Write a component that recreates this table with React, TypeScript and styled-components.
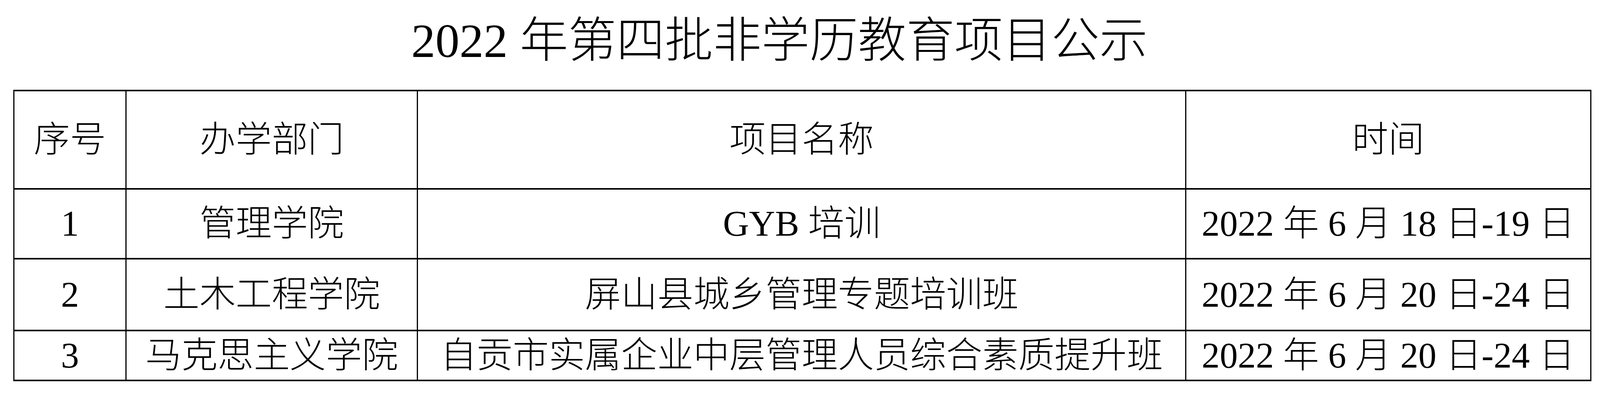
import styled, { createGlobalStyle } from "styled-components";

// sizes are taken from a 4207px wide page and kept relative to the viewport width
const GlobalStyle = createGlobalStyle`
    html, body {
        margin: 0;
        padding: 0;
        background: #fff;
    }
    body {
        font-family: "Liberation Serif", "Noto Sans CJK SC", serif;
        color: #000;
    }
`;

const Page = styled.main`
    width: 100%;
    padding-left: 0.832vw;
    box-sizing: border-box;
`;

const Title = styled.h1`
    margin: 0;
    height: 230px;
    box-sizing: border-box;
    padding-top: 41px;
    padding-right: 3.4vw;
    text-align: center;
    font-size: 3.019vw;
    line-height: 127px;
    font-weight: 300;
`;

const Table = styled.table`
    width: 98.62vw;
    border-collapse: collapse;
    table-layout: fixed;
`;

const Col = styled.col<{ $w: number }>`
    width: ${(p) => p.$w}%;
`;

const Row = styled.tr<{ $h: number }>`
    height: ${(p) => p.$h}px;
`;

const Cell = styled.td`
    border-style: solid;
    border-color: #000;
    border-width: 4px 3px;
    padding: 0;
    text-align: center;
    vertical-align: middle;
    font-size: 2.258vw;
    line-height: 1;
    font-weight: 300;
    white-space: nowrap;
`;

const widths = [7.11, 18.486, 48.735, 25.669];

const rows = [
    { no: "1", dept: "管理学院", name: "GYB 培训", time: "2022 年 6 月 18 日-19 日", h: 179 },
    { no: "2", dept: "土木工程学院", name: "屏山县城乡管理专题培训班", time: "2022 年 6 月 20 日-24 日", h: 184 },
    { no: "3", dept: "马克思主义学院", name: "自贡市实属企业中层管理人员综合素质提升班", time: "2022 年 6 月 20 日-24 日", h: 128 },
];

export default function App() {
    return (
        <Page>
            <GlobalStyle />
            <Title>2022 年第四批非学历教育项目公示</Title>
            <Table>
                <colgroup>
                    {widths.map((w, i) => (
                        <Col key={i} $w={w} />
                    ))}
                </colgroup>
                <tbody>
                    <Row $h={252}>
                        <Cell>序号</Cell>
                        <Cell>办学部门</Cell>
                        <Cell>项目名称</Cell>
                        <Cell>时间</Cell>
                    </Row>
                    {rows.map((r) => (
                        <Row key={r.no} $h={r.h}>
                            <Cell>{r.no}</Cell>
                            <Cell>{r.dept}</Cell>
                            <Cell>{r.name}</Cell>
                            <Cell>{r.time}</Cell>
                        </Row>
                    ))}
                </tbody>
            </Table>
        </Page>
    );
}
